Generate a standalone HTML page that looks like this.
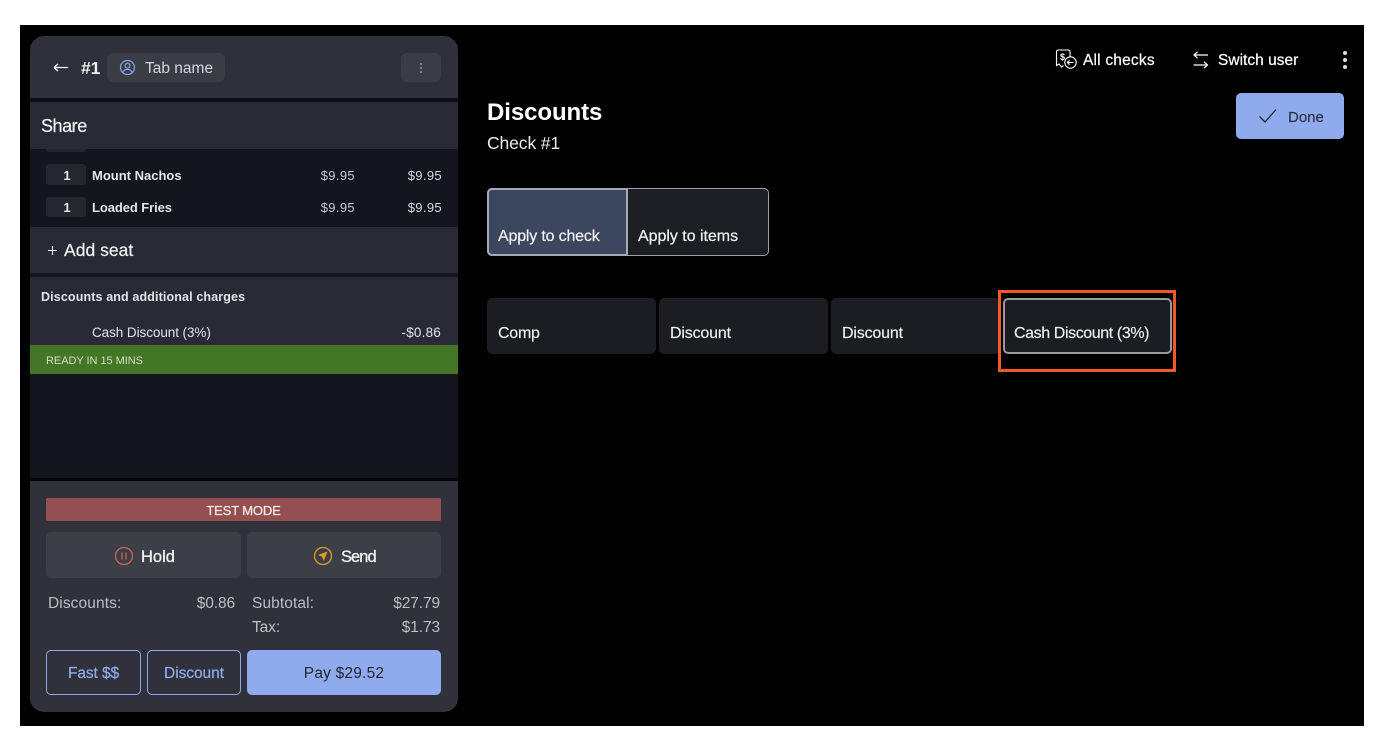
<!DOCTYPE html>
<html><head><meta charset="utf-8">
<style>
html,body{margin:0;padding:0;background:#fff;width:1386px;height:746px;overflow:hidden}
body{font-family:"Liberation Sans",sans-serif;color:#fff;position:relative}
div,svg{position:absolute;box-sizing:border-box}
.t{white-space:nowrap;line-height:1}
.r{text-align:right}
</style></head><body>
<div style="left:20px;top:25px;width:1344px;height:701px;background:#000"></div>

<div style="left:30px;top:36px;width:428px;height:676px;border-radius:14px;overflow:hidden;background:#14151f">
  <div style="left:0;top:0;width:428px;height:62px;background:#2f303b"></div>
  <div style="left:0;top:62px;width:428px;height:4px;background:#0c0c12"></div>
  <div style="left:0;top:66px;width:428px;height:47px;background:#292a36"></div>
  <div style="left:0;top:191px;width:428px;height:46px;background:#292a36"></div>
  <div style="left:0;top:237px;width:428px;height:4px;background:#14151f"></div>
  <div style="left:0;top:241px;width:428px;height:68px;background:#292a36"></div>
  <div style="left:0;top:309px;width:428px;height:29px;background:#437725"></div>
  <div style="left:0;top:442px;width:428px;height:3px;background:#050507"></div>
  <div style="left:0;top:445px;width:428px;height:231px;background:#30313b"></div>
</div>

<svg style="left:52px;top:60px" width="18" height="16" viewBox="0 0 18 16" fill="none" stroke="#fff" stroke-width="1.3"><path d="M2 7.500H16M2 7.500L6 4M2 7.500L6 11"/></svg>
<div class="t" style="left:81px;top:60px;font-size:17.500px;font-weight:bold;color:#eee;letter-spacing:-.1px">#1</div>
<div style="left:107px;top:53px;width:118px;height:29px;border-radius:6px;background:#3b3d46"></div>
<svg style="left:119px;top:59px" width="17" height="17" viewBox="0 0 17 17" fill="none" stroke="#88a6e8" stroke-width="1.2"><circle cx="8.500" cy="8.500" r="7"/><circle cx="8.500" cy="6.800" r="2.400"/><path d="M4 13.200c1-2 2.600-2.800 4.500-2.800s3.500.8 4.500 2.800"/></svg>
<div class="t" style="left:145px;top:61px;font-size:15.500px;color:#d5d6da;letter-spacing:0">Tab name</div>
<div style="left:401px;top:53px;width:40px;height:29px;border-radius:6px;background:#3b3d46"></div>
<div style="left:420px;top:63px;width:2px;height:2px;border-radius:50%;background:#7f95cc"></div>
<div style="left:420px;top:67px;width:2px;height:2px;border-radius:50%;background:#7f95cc"></div>
<div style="left:420px;top:71px;width:2px;height:2px;border-radius:50%;background:#7f95cc"></div>

<div class="t" style="left:41px;top:117px;font-size:18px;color:#f2f2f2;letter-spacing:-.45px;-webkit-text-stroke:.2px #f2f2f2">Share</div>

<div style="left:46px;top:149px;width:40px;height:3px;background:#262631;border-radius:0 0 3px 3px"></div>
<div style="left:46px;top:164px;width:40px;height:21px;background:#262631;border-radius:3px"></div>
<div class="t" style="left:47px;top:169px;width:40px;text-align:center;font-size:13px;font-weight:bold;color:#e6e6e6">1</div>
<div class="t" style="left:92px;top:169px;font-size:13px;font-weight:bold;color:#e6e6e6;letter-spacing:0">Mount Nachos</div>
<div class="t r" style="left:295px;top:169px;width:60px;font-size:13px;color:#c9c9cf;letter-spacing:.35px">$9.95</div>
<div class="t r" style="left:382px;top:169px;width:60px;font-size:13px;color:#dcdce0;letter-spacing:.35px">$9.95</div>
<div style="left:46px;top:197px;width:40px;height:20px;background:#262631;border-radius:3px"></div>
<div class="t" style="left:47px;top:201px;width:40px;text-align:center;font-size:13px;font-weight:bold;color:#e6e6e6">1</div>
<div class="t" style="left:92px;top:201px;font-size:13px;font-weight:bold;color:#e6e6e6;letter-spacing:-.08px">Loaded Fries</div>
<div class="t r" style="left:295px;top:201px;width:60px;font-size:13px;color:#c9c9cf;letter-spacing:.35px">$9.95</div>
<div class="t r" style="left:382px;top:201px;width:60px;font-size:13px;color:#dcdce0;letter-spacing:.35px">$9.95</div>

<svg style="left:47px;top:245px" width="11" height="11" viewBox="0 0 11 11" stroke="#eee" stroke-width="1.100"><path d="M5.500 1V10M1 5.500H10"/></svg>
<div class="t" style="left:64px;top:242px;font-size:17.500px;color:#f2f2f2;-webkit-text-stroke:.2px #f2f2f2;letter-spacing:.03px">Add seat</div>

<div class="t" style="left:41px;top:291px;font-size:12.500px;font-weight:bold;color:#e3e3e6;letter-spacing:.13px">Discounts and additional charges</div>
<div class="t" style="left:92px;top:326px;font-size:13.500px;color:#e3e3e6;letter-spacing:-.07px">Cash Discount (3%)</div>
<div class="t r" style="left:361px;top:326px;width:80px;font-size:13.500px;color:#e3e3e6;letter-spacing:.2px">-$0.86</div>
<div class="t" style="left:46px;top:356px;font-size:11px;color:#cfe0c4;letter-spacing:-.04px">READY IN 15 MINS</div>

<div style="left:46px;top:498px;width:395px;height:23px;background:#945050;border-radius:2px"></div>
<div class="t" style="left:46px;top:504px;width:395px;text-align:center;font-size:13px;color:#f3e8e8;letter-spacing:-.15px;-webkit-text-stroke:.3px #f3e8e8">TEST MODE</div>

<div style="left:46px;top:532px;width:195px;height:46px;border-radius:5px;background:#3d3f47"></div>
<div style="left:247px;top:532px;width:194px;height:46px;border-radius:5px;background:#3d3f47"></div>
<svg style="left:114px;top:546px" width="20" height="20" viewBox="0 0 20 20" fill="none" stroke="#d15f5f" stroke-width="1.300"><circle cx="10" cy="10" r="8.500"/><path d="M8 6.500V13.500M12 6.500V13.500"/></svg>
<div class="t" style="left:141px;top:549px;font-size:16.500px;color:#f3f3f3;-webkit-text-stroke:.3px #f3f3f3;letter-spacing:0">Hold</div>
<svg style="left:313px;top:546px" width="20" height="20" viewBox="0 0 20 20" fill="none"><circle cx="10" cy="10" r="8.500" stroke="#e09a2a" stroke-width="1.300"/><path d="M14.500 5.500L5 9L9 10.800L10.800 15Z" fill="#e09a2a"/></svg>
<div class="t" style="left:341px;top:549px;font-size:16.500px;color:#f3f3f3;-webkit-text-stroke:.3px #f3f3f3;letter-spacing:-.95px">Send</div>

<div class="t" style="left:48px;top:596px;font-size:15.500px;color:#bdbdc2;letter-spacing:.1px">Discounts:</div>
<div class="t r" style="left:155px;top:596px;width:80px;font-size:15.500px;color:#bdbdc2;letter-spacing:-.1px">$0.86</div>
<div class="t" style="left:252px;top:596px;font-size:15.500px;color:#bdbdc2;letter-spacing:.1px">Subtotal:</div>
<div class="t r" style="left:360px;top:596px;width:80px;font-size:15.500px;color:#bdbdc2;letter-spacing:-.1px">$27.79</div>
<div class="t" style="left:252px;top:620px;font-size:15.500px;color:#bdbdc2;letter-spacing:-.1px">Tax:</div>
<div class="t r" style="left:360px;top:620px;width:80px;font-size:15.500px;color:#bdbdc2;letter-spacing:-.1px">$1.73</div>

<div style="left:46px;top:650px;width:95px;height:45px;border:1.500px solid #8fabed;border-radius:5px"></div>
<div class="t" style="left:46px;top:666px;width:95px;text-align:center;font-size:15.500px;color:#8fabed;-webkit-text-stroke:.2px #8fabed;letter-spacing:-.1px">Fast $$</div>
<div style="left:147px;top:650px;width:94px;height:45px;border:1.500px solid #8fabed;border-radius:5px"></div>
<div class="t" style="left:147px;top:666px;width:94px;text-align:center;font-size:15.500px;color:#8fabed;-webkit-text-stroke:.2px #8fabed;letter-spacing:-.05px">Discount</div>
<div style="left:247px;top:650px;width:194px;height:45px;border-radius:5px;background:#8fabed"></div>
<div class="t" style="left:247px;top:666px;width:194px;text-align:center;font-size:15.500px;color:#22252f;letter-spacing:.2px">Pay $29.52</div>

<svg style="left:1054px;top:48px" width="24" height="24" viewBox="0 0 24 24" fill="none" stroke="#fff" stroke-width="1.100"><path d="M12.500 2H4.500Q2.500 2 2.500 4V17.500L5 16L7.500 19L9.500 17.500"/><path d="M12.500 2H14Q16 2 16 4V8.500"/><circle cx="16.500" cy="14.500" r="5.700"/><path d="M19.500 14.500H13.500M15.500 12.300L13.300 14.500L15.500 16.700"/><text x="6" y="12" font-size="9" font-weight="bold" fill="#fff" stroke="none" font-family="Liberation Sans">$</text></svg>
<div class="t" style="left:1083px;top:53px;font-size:15.500px;color:#fff;-webkit-text-stroke:.2px #fff;letter-spacing:.2px">All checks</div>
<svg style="left:1192px;top:50px" width="18" height="20" viewBox="0 0 18 20" fill="none" stroke="#fff" stroke-width="1.200"><path d="M16 5H2M5.500 1.800L2 5L5.500 8.200M1.500 15H15.500M12 11.800L15.500 15L12 18.200"/></svg>
<div class="t" style="left:1218px;top:53px;font-size:15.500px;color:#fff;-webkit-text-stroke:.2px #fff;letter-spacing:.02px">Switch user</div>
<div style="left:1343px;top:51px;width:4px;height:4px;border-radius:50%;background:#ddd"></div>
<div style="left:1343px;top:58px;width:4px;height:4px;border-radius:50%;background:#ddd"></div>
<div style="left:1343px;top:65px;width:4px;height:4px;border-radius:50%;background:#ddd"></div>

<div style="left:1236px;top:93px;width:108px;height:46px;border-radius:5px;background:#8fabed"></div>
<svg style="left:1258px;top:107px" width="20" height="18" viewBox="0 0 20 18" fill="none" stroke="#1f2530" stroke-width="1.300"><path d="M1.500 9.500L7 15L18 2.500"/></svg>
<div class="t" style="left:1288px;top:110px;font-size:15px;color:#2c3444;-webkit-text-stroke:.2px #2c3444">Done</div>

<div class="t" style="left:487px;top:101px;font-size:24px;font-weight:bold;letter-spacing:-.08px">Discounts</div>
<div class="t" style="left:487px;top:135px;font-size:17.500px;color:#eee;letter-spacing:-.1px">Check #1</div>

<div style="left:487px;top:188px;width:282px;height:68px;border-radius:5px;background:#1d1e23;border:1.500px solid #9da0a8"></div>
<div style="left:487px;top:188px;width:141px;height:68px;border-radius:5px 0 0 5px;background:#3c475f;border:2.500px solid #a5a9b5"></div>
<div class="t" style="left:498px;top:229px;font-size:16px;color:#f2f2f2;-webkit-text-stroke:.2px #f2f2f2;letter-spacing:-.18px">Apply to check</div>
<div class="t" style="left:638px;top:229px;font-size:16px;color:#f2f2f2;-webkit-text-stroke:.2px #f2f2f2;letter-spacing:-.03px">Apply to items</div>

<div style="left:487px;top:298px;width:169px;height:56px;border-radius:5px;background:#1c1d22"></div>
<div style="left:659px;top:298px;width:169px;height:56px;border-radius:5px;background:#1c1d22"></div>
<div style="left:831px;top:298px;width:169px;height:56px;border-radius:5px;background:#1c1d22"></div>
<div style="left:1003px;top:298px;width:169px;height:56px;border-radius:5px;background:#1c1d22;border:2.500px solid #9a9a9d"></div>
<div style="left:998px;top:290px;width:178px;height:82px;border:3.500px solid #f05a28"></div>
<div class="t" style="left:498px;top:326px;font-size:16px;color:#f0f0f0;letter-spacing:-.25px;-webkit-text-stroke:.15px #f0f0f0">Comp</div>
<div class="t" style="left:670px;top:326px;font-size:16px;color:#f0f0f0;letter-spacing:-.17px;-webkit-text-stroke:.15px #f0f0f0">Discount</div>
<div class="t" style="left:842px;top:326px;font-size:16px;color:#f0f0f0;letter-spacing:-.17px;-webkit-text-stroke:.15px #f0f0f0">Discount</div>
<div class="t" style="left:1014px;top:326px;font-size:16px;color:#f0f0f0;letter-spacing:-.4px;-webkit-text-stroke:.15px #f0f0f0">Cash Discount (3%)</div>
</body></html>
